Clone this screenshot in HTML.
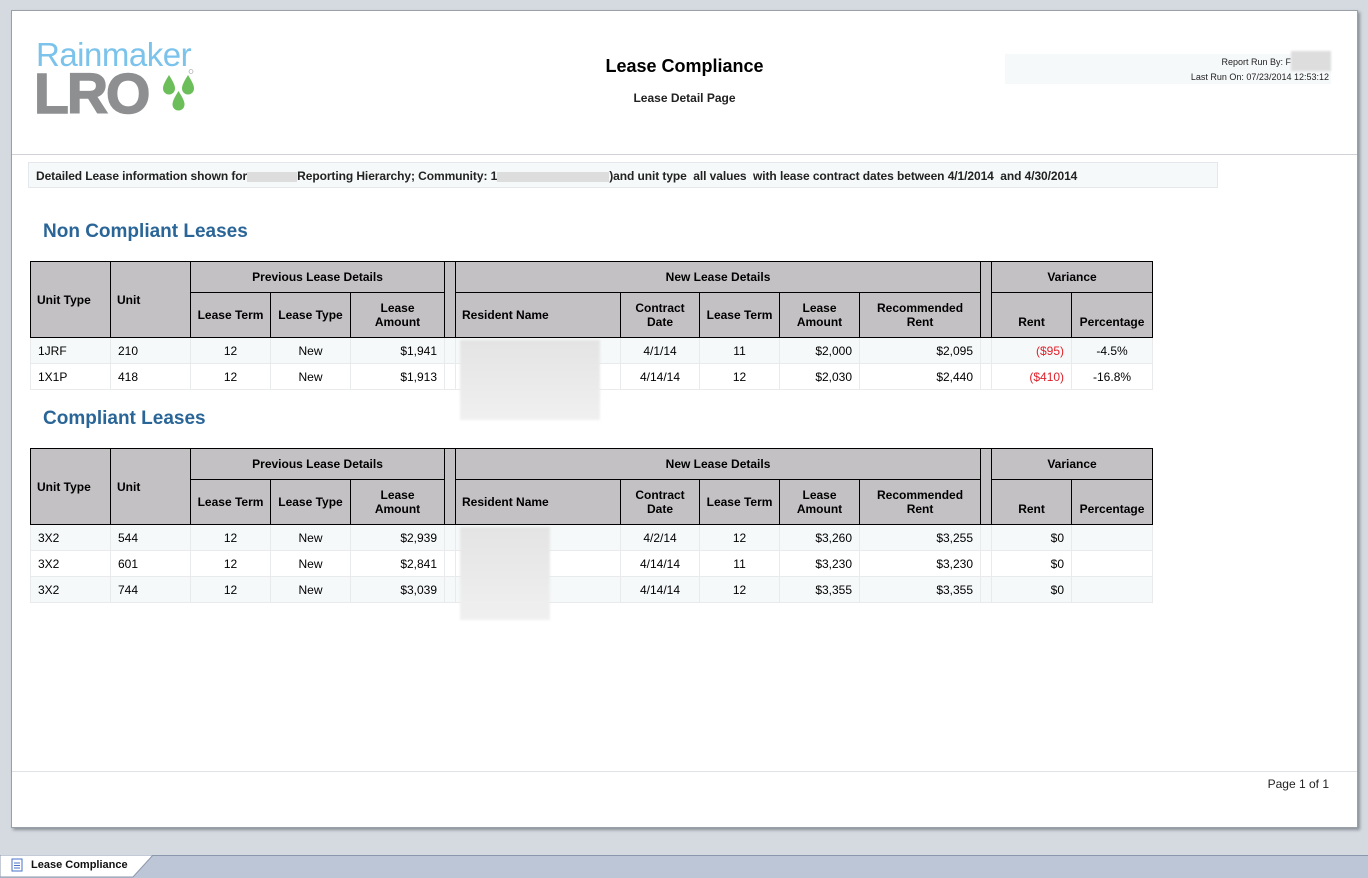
<!DOCTYPE html>
<html><head><meta charset="utf-8"><style>
*{margin:0;padding:0;box-sizing:border-box}
body{width:1368px;height:878px;background:#d5dae1;font-family:"Liberation Sans",Arial,sans-serif;position:relative;overflow:hidden;font-size:12px;color:#000}
.page{position:absolute;left:11px;top:10px;width:1347px;height:818px;background:#fff;border:1px solid #9aa0a8;box-shadow:2px 2px 3px #8a8f97}
.abs{position:absolute}
table{position:absolute;border-collapse:collapse;table-layout:fixed;left:30px}
th{background:#c4c1c4;border:1.5px solid #000;font-weight:bold;font-size:12px;line-height:14px;text-align:center}
td{border:1px solid #e8eaec;font-size:12px;padding:0 7px;height:26px}
tr.a td{background:#f6f9fa}
.l{text-align:left}.c{text-align:center}.r{text-align:right}
.red{color:#e0202a}
.blur{position:absolute;background:linear-gradient(#e4e4e4,#f0f0f0);filter:blur(1px)}
h2{position:absolute;left:43px;font-size:19px;color:#2a6597;font-weight:bold}
</style></head><body>
<div class="page">
 <div class="abs" style="left:24px;top:25px;font-size:33px;color:#7cc3ec;letter-spacing:-0.5px">Rainmaker</div>
 <div class="abs" style="left:22px;top:58px;font-size:57px;font-weight:bold;color:#8e8f91;letter-spacing:-2px;line-height:50px;-webkit-text-stroke:1.5px #8e8f91">LRO</div>
 <svg class="abs" style="left:148px;top:58px" width="36" height="46" viewBox="0 0 36 46"><path d="M9 6 C4 14 3 17 3 19.5 a6 6 0 0 0 12 0 C15 17 14 14 9 6Z" fill="#6cbe5a"/><path d="M28 6 C23 14 22 17 22 19.5 a6 6 0 0 0 12 0 C34 17 33 14 28 6Z" fill="#6cbe5a"/><path d="M18.5 22 C13.5 30 12.5 33 12.5 35.5 a6 6 0 0 0 12 0 C24.5 33 23.5 30 18.5 22Z" fill="#6cbe5a"/><circle cx="31" cy="2.5" r="2" fill="none" stroke="#999" stroke-width=".6"/></svg>
 <div class="abs" style="left:0;width:1345px;top:45px;text-align:center;font-size:18px;font-weight:bold">Lease Compliance</div>
 <div class="abs" style="left:0;width:1345px;top:80px;text-align:center;font-size:12px;font-weight:bold;color:#222">Lease Detail Page</div>
 <div class="abs" style="left:993px;top:43px;width:326px;height:30px;background:#f6f9fa"></div>
 <div class="abs" style="right:66px;top:46px;font-size:9px;color:#222">Report Run By: F</div>
 <div class="blur" style="left:1279px;top:40px;width:40px;height:20px;background:#ddd"></div>
 <div class="abs" style="right:28px;top:61px;font-size:9px;color:#222">Last Run On: 07/23/2014 12:53:12</div>
 <div class="abs" style="left:0;top:143px;width:1345px;border-top:1px solid #cfd3d8"></div>
 <div class="abs" style="left:16px;top:151px;width:1190px;height:26px;background:#f6f9fa;border:1px solid #e4e8ec"></div>
 <div class="abs" style="left:24px;top:158px;font-size:12px;font-weight:bold;color:#222;white-space:nowrap;letter-spacing:-0.08px">Detailed Lease information shown for<span style="display:inline-block;width:50px;height:10px;background:#ddd;vertical-align:middle"></span>Reporting Hierarchy; Community: 1<span style="display:inline-block;width:112px;height:10px;background:#ddd;vertical-align:middle"></span>)and unit type &nbsp;all values &nbsp;with lease contract dates between 4/1/2014 &nbsp;and 4/30/2014</div>
 <div class="abs" style="left:0;top:760px;width:1345px;border-top:1px solid #e0e3e6"></div>
 <div class="abs" style="right:28px;top:766px;font-size:12px;color:#222">Page 1 of 1</div>
</div>
<h2 style="top:221px">Non Compliant Leases</h2>
<h2 style="top:408px">Compliant Leases</h2>

<table style="top:261px;width:1122px">
<colgroup><col style="width:80px"><col style="width:80px"><col style="width:80px"><col style="width:80px"><col style="width:94px"><col style="width:11px"><col style="width:165px"><col style="width:79px"><col style="width:80px"><col style="width:80px"><col style="width:121px"><col style="width:11px"><col style="width:80px"><col style="width:81px"></colgroup>
<tr style="height:31px"><th rowspan="2" class="l" style="padding-left:6px">Unit Type</th><th rowspan="2" class="l" style="padding-left:6px">Unit</th><th colspan="3">Previous Lease Details</th><th rowspan="2"></th><th colspan="5">New Lease Details</th><th rowspan="2"></th><th colspan="2">Variance</th></tr>
<tr style="height:45px"><th>Lease Term</th><th>Lease Type</th><th>Lease<br>Amount</th><th class="l" style="padding-left:6px">Resident Name</th><th>Contract<br>Date</th><th>Lease Term</th><th>Lease<br>Amount</th><th>Recommended<br>Rent</th><th style="padding-top:14px">Rent</th><th style="padding-top:14px">Percentage</th></tr>
<tr class="a"><td>1JRF</td><td>210</td><td class="c">12</td><td class="c">New</td><td class="r">$1,941</td><td></td><td></td><td class="c">4/1/14</td><td class="c">11</td><td class="r">$2,000</td><td class="r">$2,095</td><td></td><td class="r red">($95)</td><td class="c">-4.5%</td></tr>
<tr><td>1X1P</td><td>418</td><td class="c">12</td><td class="c">New</td><td class="r">$1,913</td><td></td><td></td><td class="c">4/14/14</td><td class="c">12</td><td class="r">$2,030</td><td class="r">$2,440</td><td></td><td class="r red">($410)</td><td class="c">-16.8%</td></tr>
</table>
<div class="blur" style="left:460px;top:340px;width:140px;height:80px"></div>

<table style="top:448px;width:1122px">
<colgroup><col style="width:80px"><col style="width:80px"><col style="width:80px"><col style="width:80px"><col style="width:94px"><col style="width:11px"><col style="width:165px"><col style="width:79px"><col style="width:80px"><col style="width:80px"><col style="width:121px"><col style="width:11px"><col style="width:80px"><col style="width:81px"></colgroup>
<tr style="height:31px"><th rowspan="2" class="l" style="padding-left:6px">Unit Type</th><th rowspan="2" class="l" style="padding-left:6px">Unit</th><th colspan="3">Previous Lease Details</th><th rowspan="2"></th><th colspan="5">New Lease Details</th><th rowspan="2"></th><th colspan="2">Variance</th></tr>
<tr style="height:45px"><th>Lease Term</th><th>Lease Type</th><th>Lease<br>Amount</th><th class="l" style="padding-left:6px">Resident Name</th><th>Contract<br>Date</th><th>Lease Term</th><th>Lease<br>Amount</th><th>Recommended<br>Rent</th><th style="padding-top:14px">Rent</th><th style="padding-top:14px">Percentage</th></tr>
<tr class="a"><td>3X2</td><td>544</td><td class="c">12</td><td class="c">New</td><td class="r">$2,939</td><td></td><td></td><td class="c">4/2/14</td><td class="c">12</td><td class="r">$3,260</td><td class="r">$3,255</td><td></td><td class="r">$0</td><td></td></tr>
<tr><td>3X2</td><td>601</td><td class="c">12</td><td class="c">New</td><td class="r">$2,841</td><td></td><td></td><td class="c">4/14/14</td><td class="c">11</td><td class="r">$3,230</td><td class="r">$3,230</td><td></td><td class="r">$0</td><td></td></tr>
<tr class="a"><td>3X2</td><td>744</td><td class="c">12</td><td class="c">New</td><td class="r">$3,039</td><td></td><td></td><td class="c">4/14/14</td><td class="c">12</td><td class="r">$3,355</td><td class="r">$3,355</td><td></td><td class="r">$0</td><td></td></tr>
</table>
<div class="blur" style="left:460px;top:527px;width:90px;height:93px"></div>

<div class="abs" style="left:0;top:855px;width:1368px;height:23px;background:#bcc6d6;border-top:1px solid #8a97ad"></div>
<svg class="abs" style="left:0;top:855px" width="160" height="23"><path d="M0 0 H153 L133 22 H0Z" fill="#fff" stroke="#8a97ad"/></svg>
<svg class="abs" style="left:11px;top:858px" width="12" height="14"><rect x="1" y="1" width="10" height="12" fill="#fff" stroke="#4a72c8"/><path d="M3 5h6M3 7.5h6M3 10h6" stroke="#4a72c8"/></svg>
<div class="abs" style="left:31px;top:859px;font-size:11px;font-weight:bold;color:#111">Lease Compliance</div>
</body></html>
